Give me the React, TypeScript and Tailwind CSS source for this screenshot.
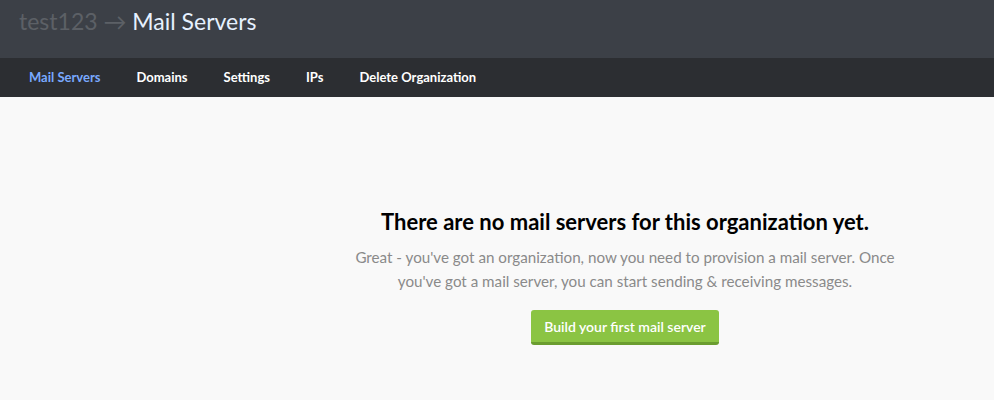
import React from 'react';

const navItems = ['Mail Servers', 'Domains', 'Settings', 'IPs', 'Delete Organization'];

export default function App() {
  return (
    <div className="min-h-[400px] bg-[#f9f9f9] font-['Lato','Liberation_Sans',sans-serif]">
      {/* Header */}
      <div className="h-[58px] bg-[#3c4047] px-[19px] pt-[3px]">
        <h1 className="text-[23px] leading-[36px] font-normal">
          <span className="text-[#5c6066]">test123 → </span>
          <span className="text-[#e6f1ff]">Mail Servers</span>
        </h1>
      </div>

      {/* Nav */}
      <div className="h-[39px] bg-[#2c2e32] flex items-center px-[29px] gap-[36px] text-[13px] font-bold pt-[1px]">
        {navItems.map((item, i) => (
          <span key={item} className={i === 0 ? 'text-[#79a9ff]' : 'text-white'}>
            {item}
          </span>
        ))}
      </div>

      {/* Empty state */}
      <div className="pl-[345px] pt-[110px]">
        <div className="w-[560px] flex flex-col items-center text-center">
          <h2 className="text-[22px] leading-[30px] font-bold text-black">
            There are no mail servers for this organization yet.
          </h2>
          <p className="mt-[8px] text-[15.2px] leading-[24px] text-[#8a8a8a]">
            Great - you've got an organization, now you need to provision a mail server. Once
            you've got a mail server, you can start sending &amp; receiving messages.
          </p>
          <button className="mt-[17px] h-[35px] px-[13px] rounded-[3px] bg-[#8bc443] border-b-[3px] border-[#6b9d30] text-white text-[14px] font-semibold">
            Build your first mail server
          </button>
        </div>
      </div>
    </div>
  );
}
